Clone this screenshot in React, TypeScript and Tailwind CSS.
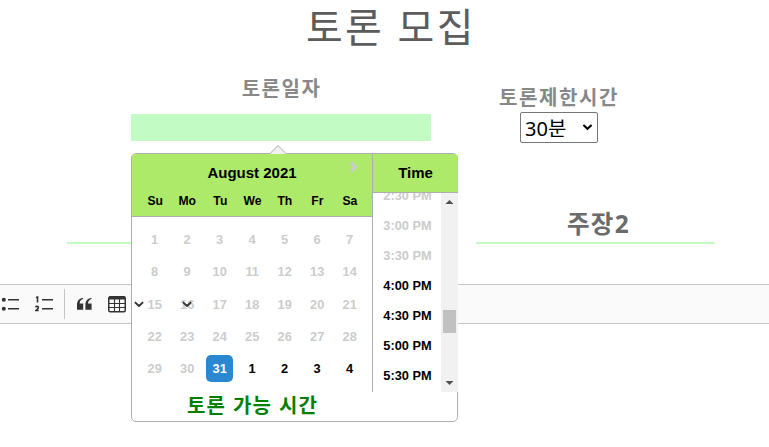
import React from "react";

const days = ["Su", "Mo", "Tu", "We", "Th", "Fr", "Sa"];
const weeks = [
  [1, 2, 3, 4, 5, 6, 7],
  [8, 9, 10, 11, 12, 13, 14],
  [15, 16, 17, 18, 19, 20, 21],
  [22, 23, 24, 25, 26, 27, 28],
  [29, 30, 31, 1, 2, 3, 4],
];
const times = ["2:30 PM", "3:00 PM", "3:30 PM", "4:00 PM", "4:30 PM", "5:00 PM", "5:30 PM"];
const korean = "font-['Liberation_Sans','Noto_Sans_CJK_KR',sans-serif]";

function Chevron() {
  return (
    <svg width="10" height="10" viewBox="0 0 10 10" fill="none" stroke="#333" strokeWidth="1.9" strokeLinecap="round" strokeLinejoin="round">
      <path d="M1.4 3.6 5 7 8.6 3.6" />
    </svg>
  );
}

function dayColor(week: number, day: number) {
  if (week < 4 || (week === 4 && (day === 29 || day === 30))) return "text-[#ccc]";
  if (day === 31) return "rounded-[5px] bg-[#2a87d0] text-white";
  return "text-black";
}

function Calendar() {
  return (
    <div className="absolute left-0 top-[39px] h-[269px] w-[327px] rounded-[5px] border border-[#aeaeae] bg-white font-['Liberation_Sans',Arial,sans-serif] text-black">
      <svg className="absolute left-[137px] top-[-9px]" width="18" height="9" viewBox="0 0 18 9">
        <path d="M0.5 9 9 0.5 17.5 9" fill="#f0f0f0" stroke="#aeaeae" />
      </svg>
      <div className="flex h-[238px]">
        <div className="w-[241px] shrink-0 border-r border-[#aeaeae]">
          <div className="relative h-[63px] rounded-tl-[4px] border-b border-[#aeaeae] bg-[#aeea69] pt-[9px]">
            <div className="text-center text-[15px] font-bold leading-5">August 2021</div>
            <svg className="absolute left-[217px] top-[7px]" width="10" height="12" viewBox="0 0 10 12" fill="none" stroke="#ccc" strokeWidth="3.2">
              <path d="M1.8 1.4 6.4 6 1.8 10.6" />
            </svg>
            <div className="ml-[6.7px] mt-[4px] flex">
              {days.map((d) => (
                <div key={d} className="w-[32.5px] text-center text-[12.8px] font-bold leading-[27px]"><span className="inline-block scale-x-95">{d}</span></div>
              ))}
            </div>
          </div>
          <div className="ml-[6.4px] mt-[6.5px]">
            {weeks.map((week, i) => (
              <div key={i} className="flex h-[32.25px] items-center">
                {week.map((d) => (
                  <div key={d} className={"mx-[2.75px] h-[27px] w-[27px] text-center text-[12.8px] font-bold leading-[27px] " + dayColor(i, d)}>{d}</div>
                ))}
              </div>
            ))}
          </div>
        </div>
        <div className="h-[238px] w-[85px] shrink-0">
          <div className="h-[39px] rounded-tr-[4px] border-b border-[#aeaeae] bg-[#aeea69] pt-[9px] text-center text-[15px] font-bold leading-5">Time</div>
          <div className="flex h-[199px] w-[85px] overflow-hidden bg-white">
            <div className="w-[68px] -translate-y-[12px]">
              {times.map((t, i) => (
                <div key={t} className={"h-[30px] whitespace-nowrap pl-px text-center text-[12.8px] font-bold leading-[30px] " + (i < 3 ? "text-[#ccc]" : "text-black")}>{t}</div>
              ))}
            </div>
            <div className="flex w-[17px] flex-col items-center bg-[#f1f1f1]">
              <svg className="shrink-0" width="17" height="17"><path d="M4.5 11h8L8.5 7z" fill="#505050" /></svg>
              <div className="mt-[100px] h-[23px] w-[13px] shrink-0 bg-[#c1c1c1]" />
              <svg className="mt-auto shrink-0" width="17" height="17"><path d="M4.5 6h8L8.5 10z" fill="#505050" /></svg>
            </div>
          </div>
        </div>
      </div>
      <div className={"absolute left-[55px] top-[239px] whitespace-nowrap text-[20px] font-bold leading-[26px] tracking-[1.2px] text-[#008000] " + korean}>토론 가능 시간</div>
    </div>
  );
}

export default function App() {
  return (
    <main className={"h-[447px] w-[769px] overflow-hidden bg-white " + korean}>
      <h1 className="h-[75px] pl-[306px] pt-[2px] text-[40px] font-normal leading-[52px] tracking-[2.3px] text-[#5c5c5c]">토론 모집</h1>
      <section className="flex h-[125px] pl-[131px]">
        <div className="w-[300px]">
          <div className="h-[39px] pl-[1px] pt-px text-center text-[20px] font-bold leading-[26px] tracking-[1.5px] text-[#888]">토론일자</div>
          <div className="relative z-10 h-[27px] bg-[#c2fbc4]"><Calendar /></div>
        </div>
        <div className="ml-[59px] w-[138px] pt-[10px] text-center">
          <div className="text-[20px] font-bold leading-[26px] tracking-[1.6px] text-[#888]">토론제한시간</div>
          <div className="ml-[30px] mt-px flex h-[31px] w-[78px] items-center justify-between rounded-[2px] border border-[#767676] pl-[4px] pr-[4px] text-[20px] text-black">
            <span className="pt-px font-['Noto_Sans','Noto_Sans_CJK_KR',sans-serif] leading-[27px]">30분</span>
            <svg className="mb-[2px]" width="11" height="8" viewBox="0 0 11 8" fill="none" stroke="#000" strokeWidth="2"><path d="M1.4 2 5.5 5.8 9.6 2" /></svg>
          </div>
        </div>
      </section>
      <section className="flex h-[84px] pl-[67px]">
        <div className="h-[44px] w-[239px] border-b-2 border-[#c2fbc4]" />
        <div className="ml-[170px] h-[44px] w-[239px] border-b-2 border-[#c2fbc4] pl-[6px] pt-[8px] text-center font-['Noto_Sans','Noto_Sans_CJK_KR',sans-serif] text-[24.5px] font-bold leading-[32px] tracking-[1.3px] text-[#6b6b6b]">주장2</div>
      </section>
      <div className="flex h-[40px] items-center border-y border-[#c4c4c4] bg-[#fafafa]">
        <svg className="ml-px shrink-0" width="20" height="20" viewBox="0 0 20 20" fill="#333">
          <circle cx="2.8" cy="5.8" r="2" /><circle cx="2.8" cy="14.8" r="2" />
          <path d="M7 5h11v1.6H7zm0 9h11v1.6H7z" />
        </svg>
        <svg className="ml-[14px] shrink-0" width="20" height="20" viewBox="0 0 20 20" fill="none" stroke="#333" strokeWidth="1.6">
          <path d="M7 5.8h11M7 14.8h11M1 3.5l1.5-.4V8.5M.7 13.3c.2-1.5 2.7-1.3 2.7.1 0 .9-1.2 1.8-2.5 3.1h2.8" />
        </svg>
        <div className="ml-[9px] h-[30px] w-px bg-[#c4c4c4]" />
        <svg className="ml-[11px] shrink-0" width="18" height="16" viewBox="0 0 18 16" fill="#333">
          <path d="M7.2 2C3.2 2.2 1 5 1 9v4.8h6.2V7.6H3.6C3.8 5.1 5 3.4 7.2 3.1zM15.6 2c-4 .2-6.2 3-6.2 7v4.8h6.2V7.6H12c.2-2.5 1.4-4.2 3.6-4.5z" />
        </svg>
        <svg className="ml-[14px] shrink-0" width="18" height="18" viewBox="0 0 18 18" fill="none" stroke="#333">
          <rect x=".75" y="1.75" width="16.5" height="15" rx="1.5" strokeWidth="1.5" />
          <path d="M1 3h16" strokeWidth="3" />
          <path d="M6.5 4v12M11.5 4v12M1 8.5h16M1 12.5h16" strokeWidth="1.1" />
        </svg>
        <div className="relative z-20 ml-[8px] flex shrink-0 gap-[38px]"><Chevron /><Chevron /></div>
      </div>
    </main>
  );
}
